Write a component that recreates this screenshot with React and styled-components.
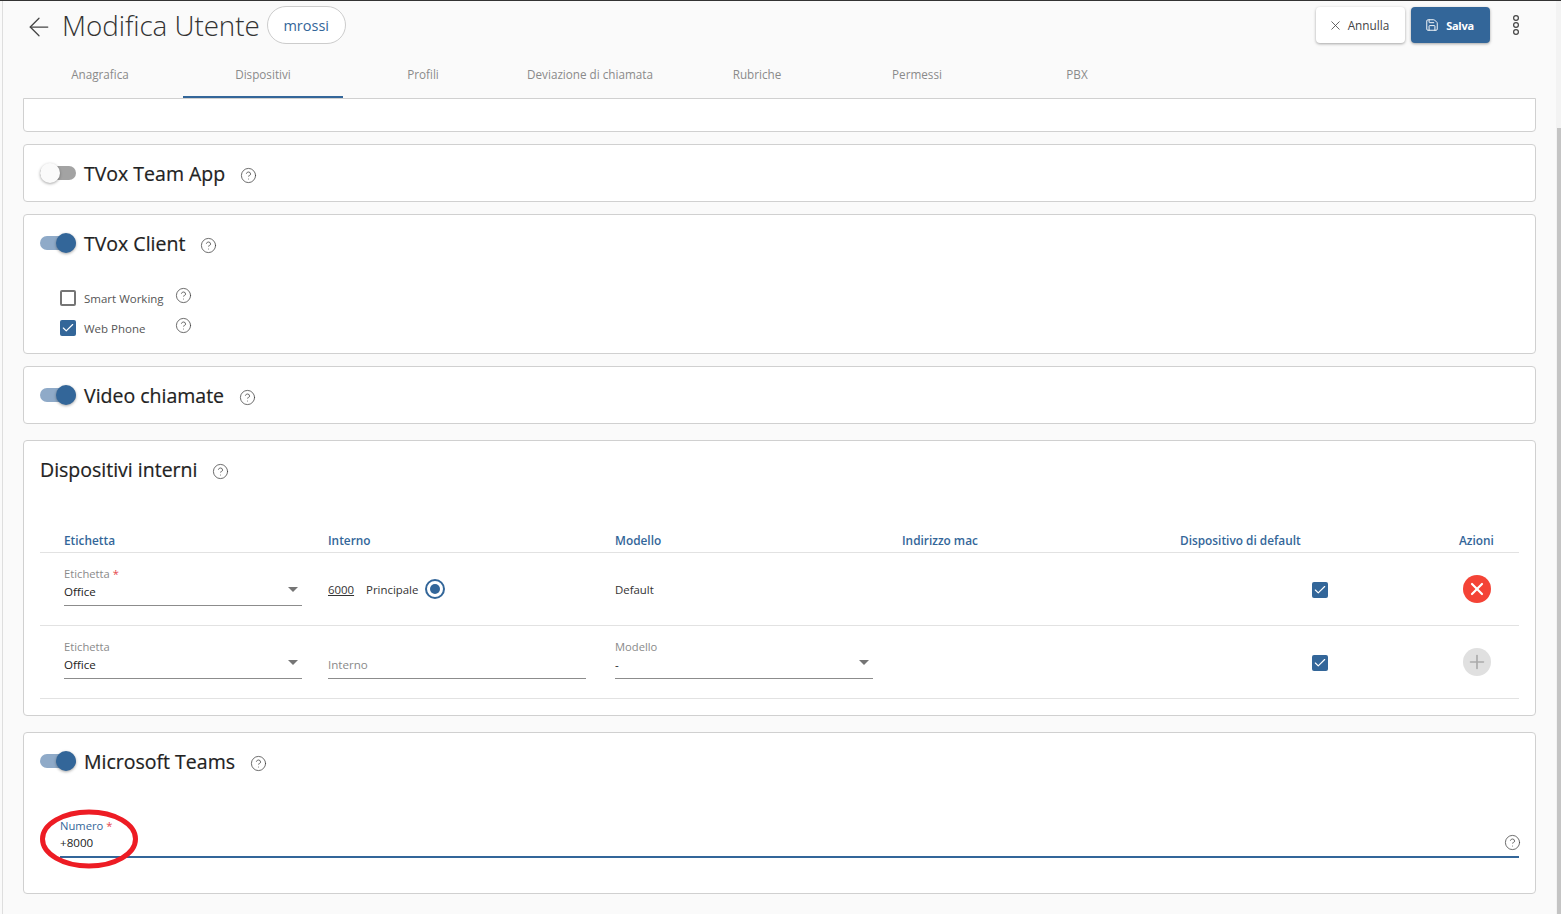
import React from 'react'
import styled, { createGlobalStyle } from 'styled-components'
import { ArrowLeft, X, Save, CircleHelp, Check, Plus } from 'lucide-react'

const blue = '#336699'

const GlobalStyle = createGlobalStyle`
  html, body { margin: 0; padding: 0; height: 100%; overflow: hidden; }
  body { background: #fafafa; font-family: "Open Sans", "Noto Sans", "Liberation Sans", sans-serif; color: #222; }
  * { box-sizing: border-box; }
`

const Page = styled.div`
  position: relative;
  width: 1561px;
  height: 914px;
  overflow: hidden;
  background: #fafafa;
  border-top: 1px solid #333;
`
const LeftRule = styled.div`
  position: absolute;
  left: 2px;
  top: 0;
  bottom: 0;
  width: 1px;
  background: #dedede;
`
const ScrollTrack = styled.div`
  position: absolute;
  right: 0;
  top: 0;
  bottom: 0;
  width: 5px;
  background: #f3f3f3;
`
const ScrollThumb = styled.div`
  position: absolute;
  left: 1px;
  right: 0;
  top: 127px;
  bottom: 0;
  background: #c4c4c4;
`
const TopBar = styled.header`
  display: flex;
  align-items: center;
  height: 48px;
  padding: 0 27px 0 24px;
`
const BackButton = styled.span`
  display: flex;
  color: #444;
  margin-right: 8px;
  margin-top: 4px;
`
const Title = styled.h1`
  margin: 0 7px 0 0;
  font-size: 27.8px;
  font-weight: 300;
  letter-spacing: -0.05px;
  color: #333;
  line-height: 36px;
`
const Chip = styled.span`
  display: flex;
  align-items: center;
  justify-content: center;
  width: 79px;
  height: 38px;
  border: 1px solid #ccc;
  border-radius: 19px;
  background: #fff;
  color: ${blue};
  font-size: 14.5px;
  font-weight: 500;
`
const Actions = styled.div`
  display: flex;
  align-items: center;
  margin-left: auto;
`
const Button = styled.button`
  display: flex;
  align-items: center;
  justify-content: center;
  gap: ${p => (p.$primary ? 7 : 5)}px;
  width: ${p => p.$width}px;
  height: 36px;
  margin-right: 6px;
  padding: 0 ${p => (p.$primary ? 2 : 4)}px 0 0;
  border: 0;
  border-radius: 4px;
  font-family: inherit;
  font-size: ${p => (p.$primary ? 11 : 11.8)}px;
  font-weight: ${p => (p.$primary ? 700 : 400)};
  letter-spacing: ${p => (p.$primary ? '-0.3px' : '0')};
  background: ${p => (p.$primary ? blue : '#fff')};
  color: ${p => (p.$primary ? '#fff' : '#444')};
  box-shadow: 0 1px 3px rgba(0, 0, 0, 0.35);
`
const Kebab = styled.svg`
  display: block;
  margin-left: 16px;
  margin-right: 14px;
`
const Tabs = styled.nav`
  display: flex;
  height: 49px;
  margin-left: 23px;
`
const Tab = styled.a`
  display: flex;
  align-items: center;
  justify-content: center;
  width: ${p => p.$width || 160}px;
  padding-top: 2px;
  padding-right: ${p => p.$nudge || 0}px;
  font-size: 11.7px;
  color: #8a8a8a;
  border-bottom: 2px solid ${p => (p.$active ? blue : 'transparent')};
`
const Content = styled.main`
  display: flex;
  flex-direction: column;
  width: 1513px;
  margin-left: 23px;
`
const Card = styled.section`
  margin-top: ${p => p.$top || 0}px;
  padding: ${p => (p.$stub ? '0' : '16px 16px')};
  padding-bottom: ${p => p.$bottom ?? 14}px;
  height: ${p => (p.$stub ? '34px' : 'auto')};
  background: #fff;
  border: 1px solid #d0d0d0;
  border-radius: ${p => (p.$stub ? '0 0 4px 4px' : '4px')};
`
const CardHead = styled.div`
  display: flex;
  align-items: center;
  height: 26px;
`
const Toggle = styled.span`
  position: relative;
  flex: none;
  display: block;
  width: 36px;
  height: 14px;
  margin: -2px 8px 0 0;
  border-radius: 7px;
  background: ${p => (p.$on ? '#8faac8' : '#a3a3a3')};
  &::after {
    content: '';
    position: absolute;
    top: -3px;
    left: ${p => (p.$on ? '16px' : '0')};
    width: 20px;
    height: 20px;
    border-radius: 50%;
    background: ${p => (p.$on ? blue : '#fafafa')};
    box-shadow: 0 1px 3px rgba(0, 0, 0, 0.35);
  }
`
const CardTitle = styled.h2`
  margin: 0 15px 0 0;
  font-size: 19.5px;
  font-weight: 500;
  -webkit-text-stroke: 0.2px #222;
  color: #222;
  line-height: 26px;
`
const Help = styled(CircleHelp)`
  flex: none;
  color: #444;
  margin-top: ${p => p.$shift || 0}px;
`
const Options = styled.div`
  margin-top: 26px;
  padding-left: 20px;
`
const Option = styled.label`
  display: flex;
  align-items: center;
  height: 30px;
  font-size: 11.5px;
  color: #555;
`
const OptionText = styled.span`
  width: 91px;
  margin-left: 8px;
`
const Box = styled.span`
  flex: none;
  display: flex;
  align-items: center;
  justify-content: center;
  width: 16px;
  height: 16px;
  border-radius: 2px;
  color: #fff;
  background: ${p => (p.$checked ? blue : '#fff')};
  border: ${p => (p.$checked ? '0' : '2px solid #757575')};
`
const Table = styled.div`
  margin-top: 43px;
`
const HeadRow = styled.div`
  display: grid;
  grid-template-columns: 264px 287px 287px 278px 279px 84px;
  height: 27px;
  align-items: center;
  border-bottom: 1px solid #e2e2e2;
`
const HeadCell = styled.span`
  padding: 1px 0 0 24px;
  font-size: 11.85px;
  font-weight: 600;
  color: ${blue};
`
const Row = styled.div`
  display: grid;
  grid-template-columns: 264px 287px 287px 278px 279px 84px;
  height: 73px;
  align-items: center;
  border-bottom: 1px solid #e2e2e2;
`
const Cell = styled.div`
  display: flex;
  align-items: center;
  padding-left: ${p => p.$left ?? 24}px;
  padding-top: ${p => p.$shift || 0}px;
  font-size: 11.4px;
  color: #333;
`
const Field = styled.div`
  position: relative;
  width: ${p => p.$width}px;
  height: 40px;
  margin-bottom: 7px;
  border-bottom: 1px solid #8c8c8c;
`
const FieldLabel = styled.div`
  height: 18px;
  font-size: 11.2px;
  line-height: 15px;
  color: #8a8a8a;
  & > b { color: #e5484d; font-weight: 400; }
`
const FieldValue = styled.div`
  height: 18px;
  font-size: 11.6px;
  line-height: 16px;
  color: ${p => (p.$muted ? '#8a8a8a' : '#222')};
`
const Caret = styled.span`
  position: absolute;
  right: 4px;
  top: 21px;
  width: 0;
  height: 0;
  border-left: 5.5px solid transparent;
  border-right: 5.5px solid transparent;
  border-top: 5px solid #757575;
`
const Extension = styled.a`
  text-decoration: underline;
  color: #333;
  margin-right: 12px;
`
const Radio = styled.span`
  display: flex;
  align-items: center;
  justify-content: center;
  width: 20px;
  height: 20px;
  margin: -1px 0 0 7px;
  border: 2px solid ${blue};
  border-radius: 50%;
  &::after {
    content: '';
    width: 10px;
    height: 10px;
    border-radius: 50%;
    background: ${blue};
  }
`
const RoundButton = styled.span`
  display: flex;
  align-items: center;
  justify-content: center;
  width: 28px;
  height: 28px;
  border-radius: 50%;
  color: ${p => (p.$danger ? '#fff' : '#aaa')};
  background: ${p => (p.$danger ? '#f44336' : '#e0e0e0')};
`
const NumberField = styled.div`
  position: relative;
  height: 40px;
  margin: 44px 0 0 20px;
  border-bottom: 2px solid ${blue};
`
const NumberLabel = styled(FieldLabel)`
  height: 17px;
  margin-top: -1px;
  color: ${blue};
`
const FieldHelp = styled(CircleHelp)`
  position: absolute;
  right: -2px;
  bottom: 5px;
  color: #444;
`
const Annotation = styled.svg`
  position: absolute;
  left: -20px;
  top: -9px;
  pointer-events: none;
`

function Checkbox({ checked }) {
  return (
    <Box $checked={checked}>
      {checked && <Check size={14} strokeWidth={2} />}
    </Box>
  )
}

function DeviceHeader() {
  const cols = ['Etichetta', 'Interno', 'Modello', 'Indirizzo mac', 'Dispositivo di default', 'Azioni']
  return (
    <HeadRow>
      {cols.map(c => <HeadCell key={c}>{c}</HeadCell>)}
    </HeadRow>
  )
}

function SwitchHead({ on, title }) {
  return (
    <CardHead>
      <Toggle $on={on} />
      <CardTitle>{title}</CardTitle>
      <Help size={17} strokeWidth={1.1} $shift={3} />
    </CardHead>
  )
}

export default function App() {
  return (
    <Page>
      <GlobalStyle />
      <LeftRule />
      <TopBar>
        <BackButton><ArrowLeft size={30} strokeWidth={1} /></BackButton>
        <Title>Modifica Utente</Title>
        <Chip>mrossi</Chip>
        <Actions>
          <Button $width={89}><X size={15} strokeWidth={1.3} />Annulla</Button>
          <Button $width={79} $primary><Save size={14} strokeWidth={1.6} />Salva</Button>
          <Kebab width="8" height="20" viewBox="0 0 8 20" fill="none" stroke="#444" strokeWidth="1.2">
            <circle cx="4" cy="3" r="2.4" />
            <circle cx="4" cy="10" r="2.4" />
            <circle cx="4" cy="17" r="2.4" />
          </Kebab>
        </Actions>
      </TopBar>
      <Tabs>
        <Tab $nudge={6}>Anagrafica</Tab>
        <Tab $active>Dispositivi</Tab>
        <Tab>Profili</Tab>
        <Tab $width={174}>Deviazione di chiamata</Tab>
        <Tab>Rubriche</Tab>
        <Tab>Permessi</Tab>
        <Tab>PBX</Tab>
      </Tabs>
      <Content>
        <Card $stub />
        <Card $top={12}>
          <SwitchHead title="TVox Team App" />
        </Card>
        <Card $top={12} $bottom={10}>
          <SwitchHead on title="TVox Client" />
          <Options>
            <Option>
              <Checkbox />
              <OptionText>Smart Working</OptionText>
              <Help size={17} strokeWidth={1.1} $shift={-5} />
            </Option>
            <Option>
              <Checkbox checked />
              <OptionText>Web Phone</OptionText>
              <Help size={17} strokeWidth={1.1} $shift={-5} />
            </Option>
          </Options>
        </Card>
        <Card $top={12}>
          <SwitchHead on title="Video chiamate" />
        </Card>
        <Card $top={16} $bottom={16}>
          <CardHead>
            <CardTitle>Dispositivi interni</CardTitle>
            <Help size={17} strokeWidth={1.1} $shift={3} />
          </CardHead>
          <Table>
            <DeviceHeader />
            <Row>
              <Cell>
                <Field $width={238}>
                  <FieldLabel>Etichetta <b>*</b></FieldLabel>
                  <FieldValue>Office</FieldValue>
                  <Caret />
                </Field>
              </Cell>
              <Cell>
                <Extension>6000</Extension>
                Principale
                <Radio />
              </Cell>
              <Cell>Default</Cell>
              <Cell />
              <Cell $left={156} $shift={2}><Checkbox checked /></Cell>
              <Cell $left={28}><RoundButton $danger><X size={20} strokeWidth={2.6} /></RoundButton></Cell>
            </Row>
            <Row>
              <Cell>
                <Field $width={238}>
                  <FieldLabel>Etichetta</FieldLabel>
                  <FieldValue>Office</FieldValue>
                  <Caret />
                </Field>
              </Cell>
              <Cell>
                <Field $width={258}>
                  <FieldLabel />
                  <FieldValue $muted>Interno</FieldValue>
                </Field>
              </Cell>
              <Cell>
                <Field $width={258}>
                  <FieldLabel>Modello</FieldLabel>
                  <FieldValue>-</FieldValue>
                  <Caret />
                </Field>
              </Cell>
              <Cell />
              <Cell $left={156} $shift={2}><Checkbox checked /></Cell>
              <Cell $left={28}><RoundButton><Plus size={22} strokeWidth={1.8} /></RoundButton></Cell>
            </Row>
          </Table>
        </Card>
        <Card $top={16} $bottom={35}>
          <SwitchHead on title="Microsoft Teams" />
          <NumberField>
            <NumberLabel>Numero <b>*</b></NumberLabel>
            <FieldValue>+8000</FieldValue>
            <FieldHelp size={17} strokeWidth={1.1} />
            <Annotation width="100" height="60" viewBox="0 0 100 60" fill="none">
              <ellipse cx="49" cy="30" rx="46.5" ry="27" stroke="#ed1c24" strokeWidth="5" />
            </Annotation>
          </NumberField>
        </Card>
      </Content>
      <ScrollTrack><ScrollThumb /></ScrollTrack>
    </Page>
  )
}
